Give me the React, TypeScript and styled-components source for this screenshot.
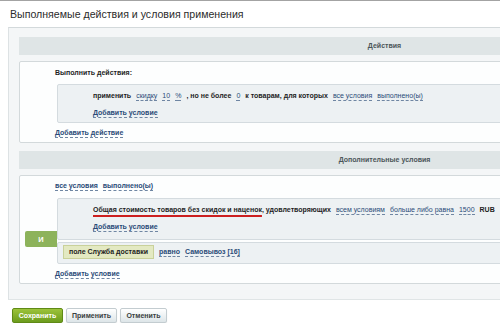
import styled, { createGlobalStyle } from "styled-components";

const Global = createGlobalStyle`
  html, body {
    margin: 0;
    padding: 0;
    background: #ffffff;
    overflow: hidden;
  }
  body {
    font-family: "Liberation Sans", Arial, sans-serif;
    color: #222;
  }
`;

const COLORS = {
  link: "#2a4b78",
  linkLine: "#6f86a3",
  panel: "#f4f6f7",
  header: "#dfe5e6",
  border: "#d3d9db",
  box: "#edf1f3",
  boxBorder: "#d4dbdf",
};

const S = {
  Page: styled.div`
    width: 760px;
    border-top: 1px solid #a3a3a3;
  `,
  TitleBar: styled.div`
    height: 26px;
    display: flex;
    align-items: center;
    padding-left: 10px;
  `,
  Title: styled.h1`
    margin: 0;
    font-weight: 400;
    font-size: 10.6px;
    color: #2b2b2b;
  `,
  Panel: styled.div`
    margin-left: 8px;
    background: ${COLORS.panel};
    border-top: 1px solid ${COLORS.border};
    border-left: 1px solid #dde2e4;
    border-bottom: 1px solid #e0e5e6;
    padding: 9px 10px 15px 10px;
  `,
  SectionHeader: styled.div<{ $first?: boolean }>`
    height: 18px;
    line-height: 18px;
    margin-top: ${(p) => (p.$first ? "0" : "8px")};
    background: ${COLORS.header};
    text-align: center;
    font-size: 7px;
    font-weight: 700;
    color: #4b5559;
  `,
  Card: styled.div`
    margin-top: 6px;
    background: #fdfefe;
    border: 1px solid ${COLORS.border};
    border-radius: 2px;
    padding: 2px 0 1px 35px;
  `,
  Row: styled.div<{ $h?: number; $mt?: number }>`
    height: ${(p) => p.$h ?? 16}px;
    margin-top: ${(p) => p.$mt ?? 0}px;
    display: flex;
    align-items: center;
    gap: 5px;
    font-size: 7px;
    font-weight: 700;
    white-space: nowrap;
    color: #1e1e1e;
  `,
  CondBox: styled.div<{ $pad?: string; $mt?: number }>`
    position: relative;
    margin: ${(p) => p.$mt ?? 4}px 20px 0 2px;
    background: ${COLORS.box};
    border: 1px solid ${COLORS.boxBorder};
    border-radius: 2px;
    padding: ${(p) => p.$pad ?? "2px 0 1px 35px"};
  `,
  Link: styled.span<{ $weight?: number }>`
    color: ${COLORS.link};
    font-weight: ${(p) => p.$weight ?? 700};
    border-bottom: 1px dashed ${COLORS.linkLine};
    line-height: 9px;
  `,
  Marked: styled.span`
    text-decoration: underline;
    text-decoration-color: #cc1f1f;
    text-decoration-thickness: 2px;
    text-underline-offset: 3px;
  `,
  AndBadge: styled.div`
    position: absolute;
    left: -33px;
    top: -12px;
    width: 32px;
    height: 16px;
    background: #8db35b;
    border-radius: 2px 0 0 2px;
    color: #ffffff;
    font-size: 7.5px;
    font-weight: 700;
    display: flex;
    align-items: center;
    justify-content: center;
  `,
  FieldTag: styled.span`
    display: inline-flex;
    align-items: center;
    height: 12px;
    padding: 0 5px;
    background: #e3e9c2;
    border: 1px solid #c9d19a;
    color: #1e1e1e;
  `,
  Buttons: styled.div`
    display: flex;
    gap: 3px;
    margin: 8px 0 0 12px;
  `,
  Button: styled.button<{ $primary?: boolean; $w: number }>`
    width: ${(p) => p.$w}px;
    height: 15px;
    padding: 0;
    font-family: "Liberation Sans", Arial, sans-serif;
    font-size: 7px;
    font-weight: 700;
    border-radius: 2px;
    color: ${(p) => (p.$primary ? "#ffffff" : "#3a3f42")};
    border: 1px solid ${(p) => (p.$primary ? "#5f8a16" : "#c3ccd0")};
    background: ${(p) =>
      p.$primary
        ? "linear-gradient(#9cc33a, #6c9c1d)"
        : "linear-gradient(#ffffff, #dde5e8)"};
    box-shadow: 0 1px 1px rgba(0, 0, 0, 0.12);
  `,
};

export default function App() {
  return (
    <>
      <Global />
      <S.Page>
        <S.TitleBar>
          <S.Title>Выполняемые действия и условия применения</S.Title>
        </S.TitleBar>
        <S.Panel>
          <S.SectionHeader $first>Действия</S.SectionHeader>
          <S.Card>
            <S.Row>Выполнить действия:</S.Row>
            <S.CondBox>
              <S.Row $h={17}>
                <span>применить</span>
                <S.Link $weight={400}>скидку</S.Link>
                <S.Link $weight={400}>10</S.Link>
                <S.Link $weight={400}>%</S.Link>
                <span>, но не более</span>
                <S.Link $weight={400}>0</S.Link>
                <span>к товарам, для которых</span>
                <S.Link $weight={400}>все условия</S.Link>
                <S.Link $weight={400}>выполнено(ы)</S.Link>
              </S.Row>
              <S.Row $h={17}>
                <S.Link>Добавить условие</S.Link>
              </S.Row>
            </S.CondBox>
            <S.Row $mt={2}>
              <S.Link>Добавить действие</S.Link>
            </S.Row>
          </S.Card>

          <S.SectionHeader>Дополнительные условия</S.SectionHeader>
          <S.Card>
            <S.Row>
              <S.Link>все условия</S.Link>
              <S.Link>выполнено(ы)</S.Link>
            </S.Row>
            <S.CondBox $pad="2px 0 4px 35px">
              <S.Row $h={17}>
                <S.Marked>Общая стоимость товаров без скидок и наценок</S.Marked>
                <span style={{ marginLeft: -5 }}>, удовлетворяющих</span>
                <S.Link $weight={400}>всем условиям</S.Link>
                <S.Link $weight={400}>больше либо равна</S.Link>
                <S.Link $weight={400}>1500</S.Link>
                <span>RUB</span>
              </S.Row>
              <S.Row $h={17}>
                <S.Link>Добавить условие</S.Link>
              </S.Row>
            </S.CondBox>
            <S.CondBox $mt={2} $pad="2px 0 5px 5px">
              <S.AndBadge>И</S.AndBadge>
              <S.Row $h={13}>
                <S.FieldTag>поле Служба доставки</S.FieldTag>
                <S.Link>равно</S.Link>
                <S.Link>Самовывоз [16]</S.Link>
              </S.Row>
            </S.CondBox>
            <S.Row $mt={2}>
              <S.Link>Добавить условие</S.Link>
            </S.Row>
          </S.Card>
        </S.Panel>
        <S.Buttons>
          <S.Button $primary $w={51}>
            Сохранить
          </S.Button>
          <S.Button $w={51}>Применить</S.Button>
          <S.Button $w={47}>Отменить</S.Button>
        </S.Buttons>
      </S.Page>
    </>
  );
}
